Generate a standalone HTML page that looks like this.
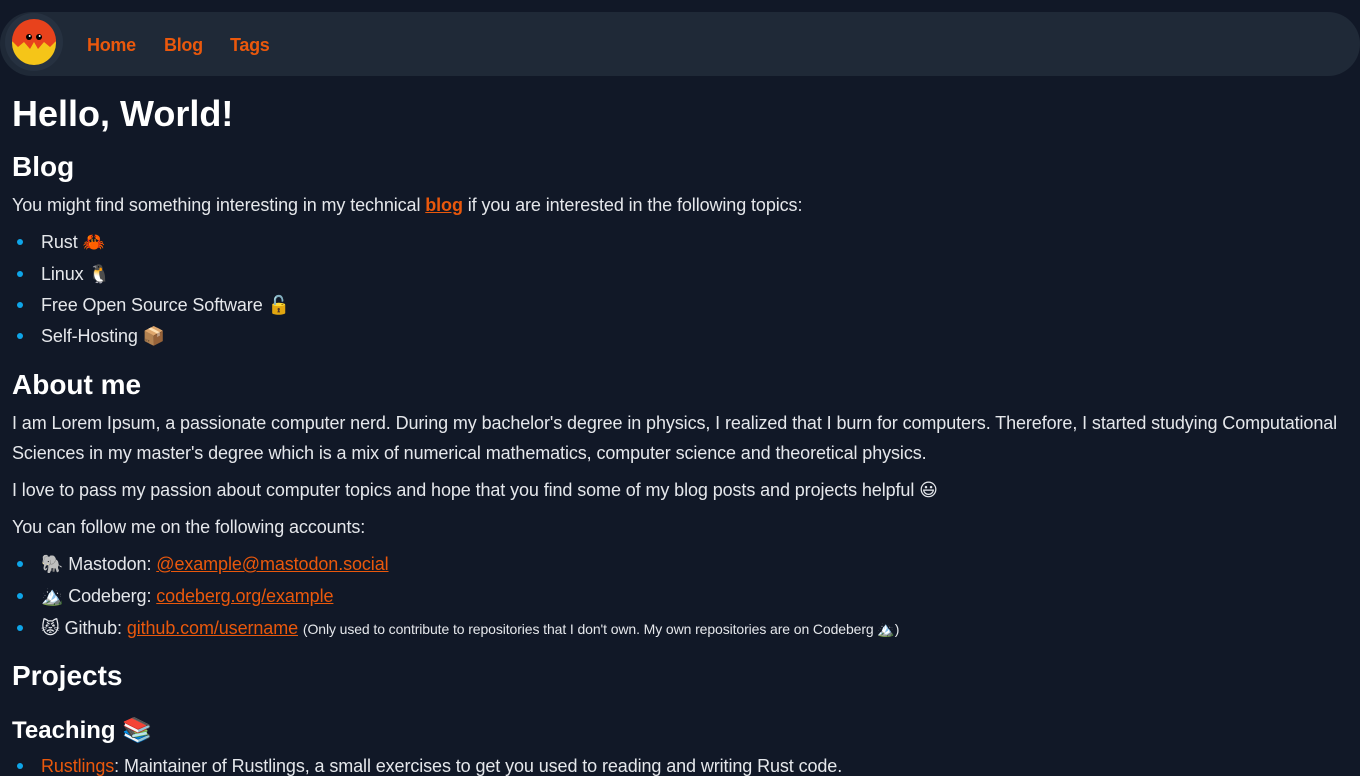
<!DOCTYPE html>
<html><head><meta charset="utf-8"><style>
*{margin:0;padding:0;box-sizing:border-box}
html,body{width:1360px;height:765px;overflow:hidden;background:#111827;color:#e5e7eb;font-family:"Liberation Sans","DejaVu Sans",sans-serif}
nav{position:absolute;left:0;top:12px;width:1360px;height:64px;background:#1f2937;border-radius:32px}
.logo{position:absolute;left:2px;top:-3px;width:62px;height:62px}
nav a{position:absolute;top:23px;color:#ea580c;font-weight:bold;font-size:18px;text-decoration:none;letter-spacing:-0.3px}
main{position:absolute;left:12px;top:0;width:1348px}
.t{position:absolute;white-space:nowrap;font-size:18px;letter-spacing:-0.1px;line-height:20px}
h1,h2,h3{position:absolute;white-space:nowrap;color:#fff;font-weight:bold}
h1{font-size:36px}h2{font-size:28px}h3{font-size:24px}
a.l{color:#ea580c;text-decoration:underline}
.b{position:absolute;left:5px;width:6px;height:6px;border-radius:50%;background:#0ea5e9}
small{font-size:14px}
</style></head><body>
<nav>
<svg class="logo" viewBox="0 0 62 62"><circle cx="32" cy="33" r="29" fill="#263140"/>
<circle cx="32" cy="34" r="22" fill="#f5c518"/>
<path d="M10 32a22 22 0 0 1 44 0 L48 38 L42 33 L36 40 L32 33 L28 40 L22 33 L16 38Z" fill="#e8421c"/>
<circle cx="27" cy="28" r="3" fill="#000"/><circle cx="37" cy="28" r="3" fill="#000"/>
<circle cx="27.7" cy="27" r="1" fill="#fff"/><circle cx="37.7" cy="27" r="1" fill="#fff"/></svg>
<a style="left:87px">Home</a><a style="left:164px">Blog</a><a style="left:230px">Tags</a>
</nav>
<main>
<h1 style="top:93px">Hello, World!</h1>
<h2 style="top:151px">Blog</h2>
<div class="t" style="top:195px">You might find something interesting in my technical <a class="l" style="font-weight:bold">blog</a> if you are interested in the following topics:</div>
<div class="b" style="top:239px"></div><div class="t" style="left:29px;top:232px">Rust 🦀</div>
<div class="b" style="top:271px"></div><div class="t" style="left:29px;top:264px">Linux 🐧</div>
<div class="b" style="top:302px"></div><div class="t" style="left:29px;top:295px">Free Open Source Software 🔓</div>
<div class="b" style="top:333px"></div><div class="t" style="left:29px;top:326px">Self-Hosting 📦</div>
<h2 style="top:369px">About me</h2>
<div class="t" style="top:413px">I am Lorem Ipsum, a passionate computer nerd. During my bachelor's degree in physics, I realized that I burn for computers. Therefore, I started studying Computational</div>
<div class="t" style="top:443px">Sciences in my master's degree which is a mix of numerical mathematics, computer science and theoretical physics.</div>
<div class="t" style="top:480px">I love to pass my passion about computer topics and hope that you find some of my blog posts and projects helpful 😃</div>
<div class="t" style="top:517px">You can follow me on the following accounts:</div>
<div class="b" style="top:561px"></div><div class="t" style="left:29px;top:554px">🐘 Mastodon: <a class="l">@example@mastodon.social</a></div>
<div class="b" style="top:593px"></div><div class="t" style="left:29px;top:586px">🏔️ Codeberg: <a class="l">codeberg.org/example</a></div>
<div class="b" style="top:625px"></div><div class="t" style="left:29px;top:618px">😾 Github: <a class="l">github.com/username</a> <small>(Only used to contribute to repositories that I don't own. My own repositories are on Codeberg 🏔️)</small></div>
<h2 style="top:660px">Projects</h2>
<h3 style="top:716px">Teaching 📚</h3>
<div class="b" style="top:763px"></div><div class="t" style="left:29px;top:756px"><a class="l" style="text-decoration:none">Rustlings</a>: Maintainer of Rustlings, a small exercises to get you used to reading and writing Rust code.</div>
</main>
</body></html>
